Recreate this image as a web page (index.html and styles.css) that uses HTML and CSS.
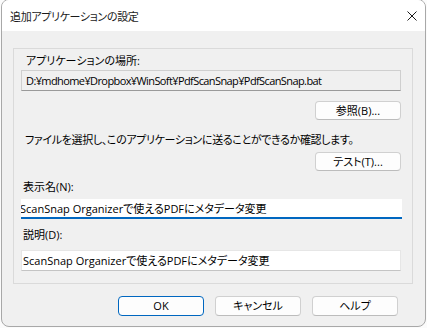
FILE: index.html
```html
<!DOCTYPE html>
<html lang="ja">
<head>
    <meta charset="UTF-8">
    <title>追加アプリケーションの設定</title>
    <link rel="stylesheet" href="styles.css">
</head>
<body>
    <div class="window">
        <div class="title-bar">
            <div class="title">追加アプリケーションの設定</div>
            <div class="close-btn">
                <svg width="10" height="10" viewBox="0 0 10 10"><path d="M0.5 0.5 L9.5 9.5 M9.5 0.5 L0.5 9.5" stroke="#1a1a1a" stroke-width="1" fill="none"/></svg>
            </div>
        </div>
        <div class="dialog-body">
            <div class="group">
                <div class="label first">アプリケーションの場所:</div>
                <div class="field readonly">D:¥mdhome¥Dropbox¥WinSoft¥PdfScanSnap¥PdfScanSnap.bat</div>
                <div class="btn-row browse"><button class="btn">参照(B)...</button></div>
                <div class="label note">ファイルを選択し、このアプリケーションに送ることができるか確認します。</div>
                <div class="btn-row test"><button class="btn">テスト(T)...</button></div>
                <div class="label name-label">表示名(N):</div>
                <div class="field focused"><span class="scrolled">ScanSnap Organizerで使えるPDFにメタデータ変更</span></div>
                <div class="label desc-label">説明(D):</div>
                <div class="field plain">ScanSnap Organizerで使えるPDFにメタデータ変更</div>
            </div>
            <div class="footer">
                <button class="btn default">OK</button>
                <button class="btn">キャンセル</button>
                <button class="btn">ヘルプ</button>
            </div>
        </div>
    </div>
</body>
</html>
```

FILE: styles.css
```css
body {
    margin: 0;
    background: #fbfbfb;
    font-family: "Open Sans", "Noto Sans CJK JP", sans-serif;
    font-size: 11px;
    font-feature-settings: "palt";
    color: #000;
}
.window {
    box-sizing: border-box;
    width: 425px;
    height: 328px;
    margin: -1px 0 0 1px;
    border: 1px solid #a8a8a8;
    border-radius: 8px;
    overflow: hidden;
    display: flex;
    flex-direction: column;
    background: #f0f0f0;
}
.title-bar {
    height: 31px;
    flex: none;
    background: #fff;
    display: flex;
    align-items: center;
    padding: 1px 8px 0 8px;
    box-sizing: border-box;
}
.title {
    flex: 1;
    color: #1a1a1a;
    letter-spacing: -0.35px;
}
.close-btn {
    display: flex;
    align-items: center;
}
.dialog-body {
    flex: 1;
    padding: 17px 0 0 11px;
}
.group {
    box-sizing: border-box;
    width: 400px;
    height: 236px;
    border: 1px solid #dadada;
    padding: 4px 11px 0 7px;
    display: flex;
    flex-direction: column;
}
.label {
    line-height: 16px;
    height: 16px;
    white-space: nowrap;
}
.label.first { padding-left: 5px; }
.label.note { margin-top: 12px; padding-left: 4px; letter-spacing: -0.35px; }
.label.name-label { margin-top: 8px; padding-left: 2px; }
.label.desc-label { margin-top: 8px; padding-left: 2px; }
.field {
    box-sizing: border-box;
    height: 21px;
    line-height: 19px;
    white-space: nowrap;
    overflow: hidden;
}
.field.readonly {
    margin-top: 1px;
    background: #f0f0f0;
    border: 1px solid #cfcfcf;
    border-bottom-color: #9a9a9a;
    padding-left: 4px;
    letter-spacing: -0.6px;
}
.field.focused {
    margin-top: 4px;
    width: 381px;
    height: 20px;
    line-height: 19px;
    background: #fff;
    border-bottom: 2px solid #0067c0;
}
.field.focused .scrolled {
    display: inline-block;
    margin-left: -1px;
}
.field.plain {
    margin-top: 7px;
    background: #fff;
    border: 1px solid #e6e6e6;
    border-bottom-color: #c4c4c4;
    padding-left: 1px;
}
.btn-row {
    display: flex;
    justify-content: flex-end;
}
.btn-row.browse { margin-top: 10px; }
.btn-row.test { margin-top: 4px; }
.btn {
    box-sizing: border-box;
    width: 86px;
    height: 19px;
    padding: 0;
    background: #fdfdfd;
    border: 1px solid #d0d0d0;
    border-bottom-color: #bcbcbc;
    border-radius: 4px;
    font-family: inherit;
    font-size: 11px;
    font-feature-settings: "palt";
    color: #000;
    line-height: 16px;
}
.footer {
    display: flex;
    gap: 11px;
    padding: 12px 0 0 105px;
}
.footer .btn { height: 20px; }
.footer .btn.default {
    border: 1px solid #0067c0;
}
```
